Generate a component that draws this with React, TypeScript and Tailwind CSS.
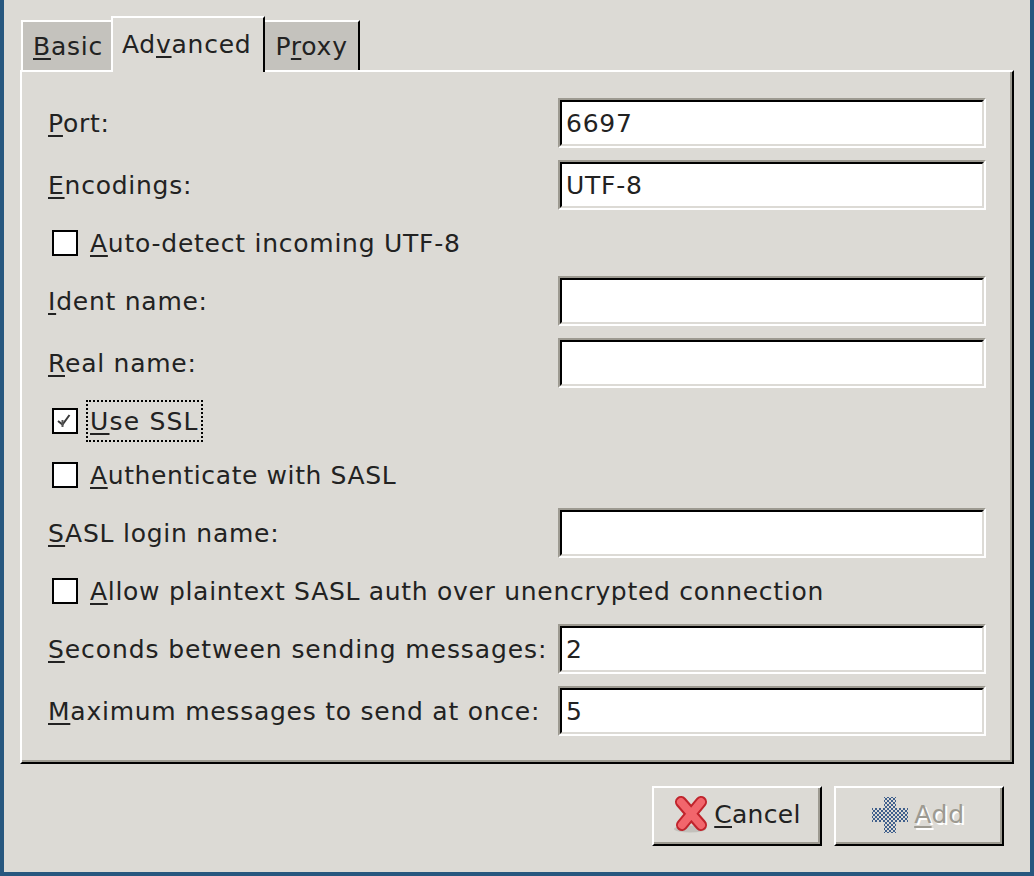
import type { ReactNode } from "react";

function Mn({ children }: { children: ReactNode }) {
  return <u className="underline decoration-2 underline-offset-[3px] [text-decoration-skip-ink:none]">{children}</u>;
}

function Field({ label, value, className }: { label: ReactNode; value?: string; className?: string }) {
  return (
    <div className={`flex items-center justify-between ${className ?? ""}`}>
      <span className="pt-[1px]">{label}</span>
      <div className="w-[428px] h-[50px] border-2 border-t-[#9d9a91] border-l-[#9d9a91] border-b-white border-r-white">
        <div className="h-full border-2 border-t-black border-l-black border-b-[#dcdad5] border-r-[#dcdad5] bg-white pl-[4px] leading-[44px]">
          {value}
        </div>
      </div>
    </div>
  );
}

function Check({ label, checked, focused, className }: { label: ReactNode; checked?: boolean; focused?: boolean; className?: string }) {
  return (
    <div className={`flex items-center h-[42px] pl-[4px] ${className ?? ""}`}>
      <div className="w-[26px] h-[26px] border-2 border-black bg-white flex items-center justify-center">
        {checked && (
          <svg width="18" height="18" viewBox="0 0 18 18">
            <path d="M2 9l4.5 3.5L13.5 3" fill="none" stroke="#3a3a3a" strokeWidth="2" />
            <path d="M6.5 8v7" fill="none" stroke="#555" strokeWidth="2" />
          </svg>
        )}
      </div>
      <span className={`ml-[8px] px-[2px] h-[42px] leading-[40px] border-2 ${focused ? "border-dotted border-black" : "border-transparent"}`}>{label}</span>
    </div>
  );
}

function Tab({ children, active, last, className }: { children: ReactNode; active?: boolean; last?: boolean; className?: string }) {
  if (active) {
    return (
      <div className={`h-[56px] bg-[#dcdad5] border-t-2 border-l-2 border-r-2 border-t-white border-l-white border-r-black pl-[9px] pr-[12px] pt-[8px] leading-[38px] relative z-10 -mb-[2px] ${className ?? ""}`}>
        {children}
      </div>
    );
  }
  return (
    <div className={`h-[50px] bg-[#c4c2bd] border-t-2 border-t-white pl-[10px] pt-[6px] leading-[38px] ${last ? "border-r-2 border-r-black pr-[10px]" : "border-l-2 border-l-white pr-[8px]"} ${className ?? ""}`}>
      {children}
    </div>
  );
}

function CancelIcon() {
  return (
    <svg width="36" height="40" viewBox="0 0 36 40">
      <ellipse cx="16" cy="34" rx="16" ry="3.5" fill="#c2c0bb" />
      <path d="M7 7L27 30M27 7L8 30" fill="none" stroke="#c0242c" strokeWidth="12" strokeLinecap="round" />
      <path d="M7 7L27 30M27 7L8 30" fill="none" stroke="#f2666c" strokeWidth="8" strokeLinecap="round" />
    </svg>
  );
}

function AddIcon() {
  return (
    <svg width="38" height="38" viewBox="0 0 38 38">
      <defs>
        <pattern id="stipple" width="4" height="4" patternUnits="userSpaceOnUse">
          <rect width="4" height="4" fill="#dcdad5" />
          <rect width="2" height="2" fill="#3f5f8c" />
          <rect x="2" y="2" width="2" height="2" fill="#3f5f8c" />
        </pattern>
      </defs>
      <path d="M13 1h12v11h12v14H25v11H13V26H1V12h12z" fill="url(#stipple)" />
    </svg>
  );
}

function Btn({ children, className }: { children: ReactNode; className?: string }) {
  return (
    <div className={`w-[170px] h-[60px] border-2 border-t-white border-l-white border-b-black border-r-black ${className ?? ""}`}>
      <div className="h-full border-b-2 border-r-2 border-[#9d9a91] flex items-center justify-center">
        {children}
      </div>
    </div>
  );
}

export default function App() {
  return (
    <div className="w-[1034px] h-[876px] border-l-4 border-r-4 border-b-4 border-[#27577f] bg-[#dcdad5] font-['DejaVu_Sans',sans-serif] text-[25px] tracking-[0.75px] text-[#222222] overflow-hidden">
      <div className="flex items-end pl-[17px] pt-[16px] h-[70px]">
        <Tab>
          <Mn>B</Mn>asic
        </Tab>
        <Tab active>
          Ad<Mn>v</Mn>anced
        </Tab>
        <Tab last>
          P<Mn>r</Mn>oxy
        </Tab>
      </div>
      <div className="ml-[16px] w-[994px] h-[694px] border-2 border-t-white border-l-white border-b-black border-r-black">
        <div className="h-full border-b-2 border-r-2 border-[#9d9a91] pl-[26px] pr-[24px] pt-[26px]">
          <Field label={<><Mn>P</Mn>ort:</>} value="6697" />
          <Field className="mt-[12px]" label={<><Mn>E</Mn>ncodings:</>} value="UTF-8" />
          <Check className="mt-[12px]" label={<><Mn>A</Mn>uto-detect incoming UTF-8</>} />
          <Field className="mt-[12px]" label={<><Mn>I</Mn>dent name:</>} />
          <Field className="mt-[12px]" label={<><Mn>R</Mn>eal name:</>} />
          <Check className="mt-[12px]" checked focused label={<span className="tracking-[1.2px]"><Mn>U</Mn>se SSL</span>} />
          <Check className="mt-[12px]" label={<span className="tracking-[0.6px]"><Mn>A</Mn>uthenticate with SASL</span>} />
          <Field className="mt-[12px]" label={<><Mn>S</Mn>ASL login name:</>} />
          <Check className="mt-[12px]" label={<span className="tracking-[0.7px]"><Mn>A</Mn>llow plaintext SASL auth over unencrypted connection</span>} />
          <Field className="mt-[12px]" label={<span className="tracking-[0.9px]"><Mn>S</Mn>econds between sending messages:</span>} value="2" />
          <Field className="mt-[12px]" label={<><Mn>M</Mn>aximum messages to send at once:</>} value="5" />
        </div>
      </div>
      <div className="flex justify-end gap-[12px] pr-[26px] mt-[22px]">
        <Btn>
          <div className="flex items-center pl-[3px]">
            <CancelIcon />
            <span className="ml-[4px] tracking-[0.3px]"><Mn>C</Mn>ancel</span>
          </div>
        </Btn>
        <Btn>
          <AddIcon />
          <span className="ml-[5px] text-[#9d9a91] [text-shadow:2px_2px_0_#fff]"><Mn>A</Mn>dd</span>
        </Btn>
      </div>
    </div>
  );
}
